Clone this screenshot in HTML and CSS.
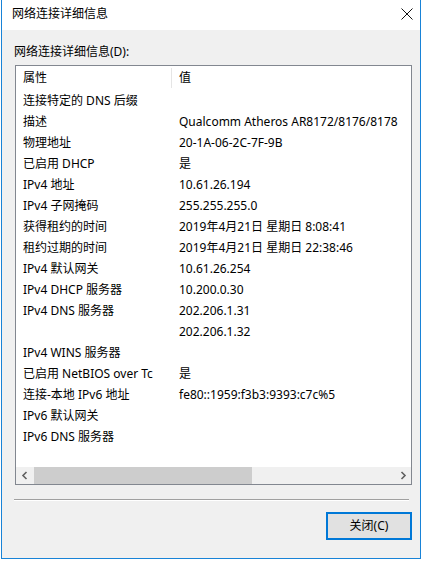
FILE: index.html
```html
<!DOCTYPE html>
<html lang="zh-CN">
<head>
<meta charset="utf-8">
<title>网络连接详细信息</title>
<link rel="stylesheet" href="styles.css">
</head>
<body>
<div class="window">
  <div class="titlebar">
    <span class="title">网络连接详细信息</span>
    <svg class="close" width="12" height="12" viewBox="0 0 12 12"><path d="M0.5 0.5 L11.5 11.5 M11.5 0.5 L0.5 11.5" stroke="#111" stroke-width="1" fill="none"/></svg>
  </div>
  <div class="content">
    <div class="label">网络连接详细信息(D):</div>
    <div class="listbox">
      <div class="listhead">
        <div class="cell c1">属性</div>
        <div class="sep"></div>
        <div class="cell c2">值</div>
      </div>
      <div class="rows">
        <div class="row"><div class="cell c1">连接特定的 DNS 后缀</div><div class="cell c2"></div></div>
        <div class="row"><div class="cell c1">描述</div><div class="cell c2">Qualcomm Atheros AR8172/8176/8178</div></div>
        <div class="row"><div class="cell c1">物理地址</div><div class="cell c2">20-1A-06-2C-7F-9B</div></div>
        <div class="row"><div class="cell c1">已启用 DHCP</div><div class="cell c2">是</div></div>
        <div class="row"><div class="cell c1">IPv4 地址</div><div class="cell c2">10.61.26.194</div></div>
        <div class="row"><div class="cell c1">IPv4 子网掩码</div><div class="cell c2">255.255.255.0</div></div>
        <div class="row"><div class="cell c1">获得租约的时间</div><div class="cell c2">2019年4月21日 星期日 8:08:41</div></div>
        <div class="row"><div class="cell c1">租约过期的时间</div><div class="cell c2">2019年4月21日 星期日 22:38:46</div></div>
        <div class="row"><div class="cell c1">IPv4 默认网关</div><div class="cell c2">10.61.26.254</div></div>
        <div class="row"><div class="cell c1">IPv4 DHCP 服务器</div><div class="cell c2">10.200.0.30</div></div>
        <div class="row"><div class="cell c1">IPv4 DNS 服务器</div><div class="cell c2">202.206.1.31</div></div>
        <div class="row"><div class="cell c1"></div><div class="cell c2">202.206.1.32</div></div>
        <div class="row"><div class="cell c1">IPv4 WINS 服务器</div><div class="cell c2"></div></div>
        <div class="row"><div class="cell c1">已启用 NetBIOS over Tc</div><div class="cell c2">是</div></div>
        <div class="row"><div class="cell c1">连接-本地 IPv6 地址</div><div class="cell c2">fe80::1959:f3b3:9393:c7c%5</div></div>
        <div class="row"><div class="cell c1">IPv6 默认网关</div><div class="cell c2"></div></div>
        <div class="row"><div class="cell c1">IPv6 DNS 服务器</div><div class="cell c2"></div></div>
      </div>
      <div class="hscroll">
        <div class="arrow">
          <svg width="8" height="9" viewBox="0 0 8 9"><path d="M5.5 1 L2 4.5 L5.5 8" stroke="#606060" stroke-width="1.6" fill="none"/></svg>
        </div>
        <div class="track"><div class="thumb"></div></div>
        <div class="arrow">
          <svg width="8" height="9" viewBox="0 0 8 9"><path d="M2.5 1 L6 4.5 L2.5 8" stroke="#606060" stroke-width="1.6" fill="none"/></svg>
        </div>
      </div>
    </div>
    <div class="divider"></div>
    <div class="buttons">
      <button class="btn">关闭(C)</button>
    </div>
  </div>
</div>
</body>
</html>
```

FILE: styles.css
```css
html, body {
  margin: 0;
  padding: 0;
  background: #ffffff;
}
body {
  font-family: "Noto Sans", "Noto Sans CJK SC", sans-serif;
  font-size: 12px;
  color: #000;
}
.window {
  margin-left: 1px;
  width: 420px;
  height: 559px;
  box-sizing: border-box;
  border: 1px solid #1883d7;
  border-top: none;
  display: flex;
  flex-direction: column;
  background: #f0f0f0;
}
.titlebar {
  height: 30px;
  background: #ffffff;
  display: flex;
  align-items: center;
  justify-content: space-between;
  padding: 0 0 0 10px;
  flex: none;
}
.title {
  line-height: 16px;
  margin-top: -2px;
}
.close {
  margin-right: 7px;
  margin-top: -2px;
}
.content {
  flex: 1;
  display: flex;
  flex-direction: column;
  padding-top: 14px;
}
.label {
  line-height: 16px;
  height: 16px;
  margin-left: 12px;
}
.listbox {
  margin-top: 5px;
  margin-left: 13px;
  width: 397px;
  height: 420px;
  box-sizing: border-box;
  border: 1px solid #828790;
  background: #ffffff;
  display: flex;
  flex-direction: column;
  overflow: hidden;
}
.listhead {
  height: 24px;
  display: flex;
  align-items: center;
  flex: none;
}
.sep {
  width: 1px;
  height: 20px;
  background: #e5e5e5;
  flex: none;
}
.rows {
  flex: 1;
  overflow: hidden;
}
.row {
  height: 21px;
  display: flex;
  align-items: center;
}
.cell {
  white-space: nowrap;
  overflow: hidden;
  line-height: 16px;
  box-sizing: border-box;
}
.c1 {
  width: 147px;
  margin-right: 9px;
  flex: none;
  padding-left: 7px;
}
.listhead .c1 {
  margin-right: 8px;
}
.c2 {
  flex: 1;
  padding-left: 7px;
}
.hscroll {
  height: 17px;
  flex: none;
  display: flex;
  background: #f0f0f0;
}
.arrow {
  width: 17px;
  height: 17px;
  display: flex;
  align-items: center;
  justify-content: center;
  flex: none;
}
.track {
  flex: 1;
  padding: 0 2px 0 1px;
  display: flex;
}
.thumb {
  width: 218px;
  height: 17px;
  background: #cdcdcd;
}
.divider {
  margin: 14px 0 0 12px;
  width: 395px;
  height: 1px;
  background: #a0a0a0;
  border-bottom: 1px solid #ffffff;
}
.buttons {
  display: flex;
  justify-content: flex-end;
  padding-right: 8px;
  margin-top: 11px;
}
.btn {
  width: 86px;
  height: 28px;
  box-sizing: border-box;
  border: 2px solid #0078d7;
  background: #e1e1e1;
  font-family: "Noto Sans", "Noto Sans CJK SC", sans-serif;
  font-size: 12px;
  color: #000;
  padding: 0;
  line-height: 16px;
}
```
